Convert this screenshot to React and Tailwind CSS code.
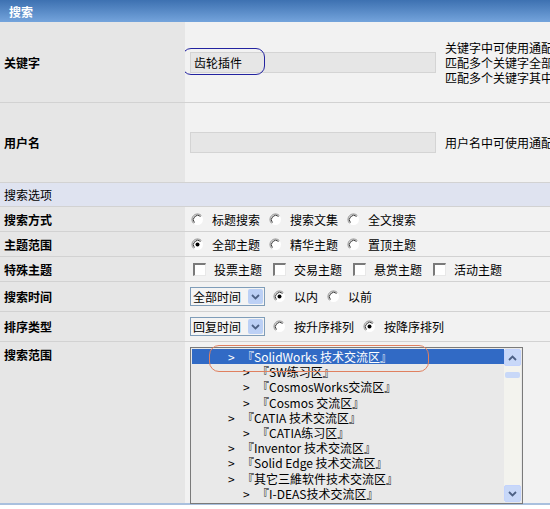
import React from "react";

const font = { fontFamily: '"Noto Sans CJK SC", "Liberation Sans", sans-serif' };

function Radio({ checked }) {
  return (
    <svg width="13" height="13" viewBox="0 0 13 13" className="shrink-0">
      <circle cx="6.5" cy="6.5" r="5.5" fill="#ffffff" />
      <path d="M2.6 10.4 A5.5 5.5 0 0 1 10.4 2.6" fill="none" stroke="#8a8a8a" strokeWidth="1" />
      <path d="M3.4 9.6 A4.4 4.4 0 0 1 9.6 3.4" fill="none" stroke="#3a3a3a" strokeWidth="1" />
      {checked ? <circle cx="6.5" cy="6.5" r="2" fill="#000" /> : null}
    </svg>
  );
}

function RadioItem({ checked, label, className = "" }) {
  return (
    <span className={`inline-flex items-center ${className}`}>
      <Radio checked={checked} />
      <span className="ml-[8px]">{label}</span>
    </span>
  );
}

function CheckItem({ label, className = "" }) {
  return (
    <span className={`inline-flex items-center ${className}`}>
      <span className="h-[13px] w-[13px] shrink-0 border-l-2 border-t-2 border-b border-r border-l-[#7a7a7a] border-t-[#7a7a7a] border-b-[#e8e8e8] border-r-[#e8e8e8] bg-white" />
      <span className="ml-[8px]">{label}</span>
    </span>
  );
}

function Select({ value }) {
  return (
    <span className="inline-flex h-[19px] w-[75px] items-center justify-between border border-[#7f9db9] bg-[#f4f4f4] pl-[2px] pr-[1px]">
      <span>{value}</span>
      <span className="grid h-[15px] w-[15px] place-items-center rounded-[2px] bg-[#bcd0f5]">
        <svg width="9" height="6" viewBox="0 0 9 6">
          <path d="M1 1 L4.5 4.5 L8 1" fill="none" stroke="#4d6185" strokeWidth="1.8" />
        </svg>
      </span>
    </span>
  );
}

function Row({ label, h, children }) {
  return (
    <div className="flex border-b border-[#d2d2d2]" style={{ height: h }}>
      <div className="flex w-[185px] shrink-0 items-center bg-[#e6e6e6] pl-[4px] font-bold">{label}</div>
      <div className="flex min-w-0 flex-1 items-center overflow-hidden bg-[#f2f2f2] pl-[5px]">{children}</div>
    </div>
  );
}

const forums = [
  { t: "『SolidWorks 技术交流区』", d: 1, sel: true },
  { t: "『SW练习区』", d: 2 },
  { t: "『CosmosWorks交流区』", d: 2 },
  { t: "『Cosmos 交流区』", d: 2 },
  { t: "『CATIA 技术交流区』", d: 1 },
  { t: "『CATIA练习区』", d: 2 },
  { t: "『Inventor 技术交流区』", d: 1 },
  { t: "『Solid Edge 技术交流区』", d: 1 },
  { t: "『其它三維软件技术交流区』", d: 1 },
  { t: "『I-DEAS技术交流区』", d: 2 },
];

export default function App() {
  return (
    <div className="relative h-[509px] w-[550px] overflow-hidden bg-white text-[12px] leading-[15px] text-black" style={font}>
      <div className="flex h-[22px] items-center bg-gradient-to-b from-[#3d71b1] to-[#74a4dc] pl-[9px] font-bold text-white">搜索</div>

      <Row label="关键字" h="81px">
        <div className="relative flex shrink-0 items-center">
          <div className="flex h-[21px] w-[246px] items-center border border-[#d4d4d4] bg-[#e6e6e6] pl-[3px]">齿轮插件</div>
          <div className="pointer-events-none absolute left-[-8px] top-[-4px] h-[27px] w-[83px] rounded-[9px] border border-[#2323a0]" />
        </div>
        <div className="ml-[9px] whitespace-nowrap">
          <div>关键字中可使用通配符 *</div>
          <div>匹配多个关键字全部，可用空格或 AND 连接</div>
          <div>匹配多个关键字其中部分，可用 | 或 OR 连接</div>
        </div>
      </Row>

      <Row label="用户名" h="80px">
        <div className="h-[21px] w-[246px] shrink-0 border border-[#d4d4d4] bg-[#e6e6e6]" />
        <div className="ml-[9px] whitespace-nowrap">用户名中可使用通配符 *</div>
      </Row>

      <div className="flex h-[24px] items-center border-b border-[#d2d2d2] bg-[#dfe3f0] pl-[4px]">搜索选项</div>

      <Row label="搜索方式" h="25px">
        <RadioItem label="标题搜索" className="ml-[1px]" />
        <RadioItem label="搜索文集" className="ml-[9px]" />
        <RadioItem label="全文搜索" className="ml-[9px]" />
      </Row>
      <Row label="主题范围" h="25px">
        <RadioItem checked label="全部主题" className="ml-[1px]" />
        <RadioItem label="精华主题" className="ml-[9px]" />
        <RadioItem label="置顶主题" className="ml-[9px]" />
      </Row>
      <Row label="特殊主题" h="25px">
        <CheckItem label="投票主题" className="ml-[3px]" />
        <CheckItem label="交易主题" className="ml-[11px]" />
        <CheckItem label="悬赏主题" className="ml-[11px]" />
        <CheckItem label="活动主题" className="ml-[11px]" />
      </Row>
      <Row label="搜索时间" h="30px">
        <Select value="全部时间" />
        <RadioItem checked label="以内" className="ml-[8px]" />
        <RadioItem label="以前" className="ml-[9px]" />
      </Row>
      <Row label="排序类型" h="30px">
        <Select value="回复时间" />
        <RadioItem label="按升序排列" className="ml-[8px]" />
        <RadioItem checked label="按降序排列" className="ml-[9px]" />
      </Row>

      <div className="flex h-[163px] border-b-2 border-[#a9c0de]">
        <div className="w-[185px] shrink-0 bg-[#e6e6e6] pl-[4px] pt-[5px] font-bold">搜索范围</div>
        <div className="flex-1 bg-[#f2f2f2] pl-[5px] pt-[5px]">
          <div className="relative flex h-[157px] w-[333px] border border-[#7a7a7a] bg-[#e9e9e9] p-[1px]">
            <div className="flex-1 overflow-hidden">
              {forums.map((f) => (
                <div
                  key={f.t}
                  className={`flex h-[15.2px] items-center whitespace-nowrap ${f.sel ? "bg-[#316ac5] text-white" : ""}`}
                  style={{ paddingLeft: f.d === 1 ? 36 : 51 }}
                >
                  <span className="w-[14px]">&gt;</span>
                  <span>{f.t}</span>
                </div>
              ))}
            </div>
            <div className="flex w-[17px] flex-col bg-[#f3f3ee]">
              <div className="grid h-[17px] w-[17px] place-items-center rounded-[2px] border border-[#c3d3fd] bg-[#c8d8f8]">
                <svg width="9" height="6" viewBox="0 0 9 6">
                  <path d="M1 5 L4.5 1.5 L8 5" fill="none" stroke="#4d6185" strokeWidth="1.8" />
                </svg>
              </div>
              <div className="mb-auto ml-[1px] mt-[6px] h-[6px] w-[15px] rounded-[2px] bg-[#c8d8f8]" />
              <div className="grid h-[17px] w-[17px] place-items-center rounded-[2px] border border-[#c3d3fd] bg-[#c8d8f8]">
                <svg width="9" height="6" viewBox="0 0 9 6">
                  <path d="M1 1 L4.5 4.5 L8 1" fill="none" stroke="#4d6185" strokeWidth="1.8" />
                </svg>
              </div>
            </div>
            <div className="pointer-events-none absolute left-[18px] top-[-3px] h-[27px] w-[220px] rounded-[10px] border border-[#e0805f]" />
          </div>
        </div>
      </div>
    </div>
  );
}
